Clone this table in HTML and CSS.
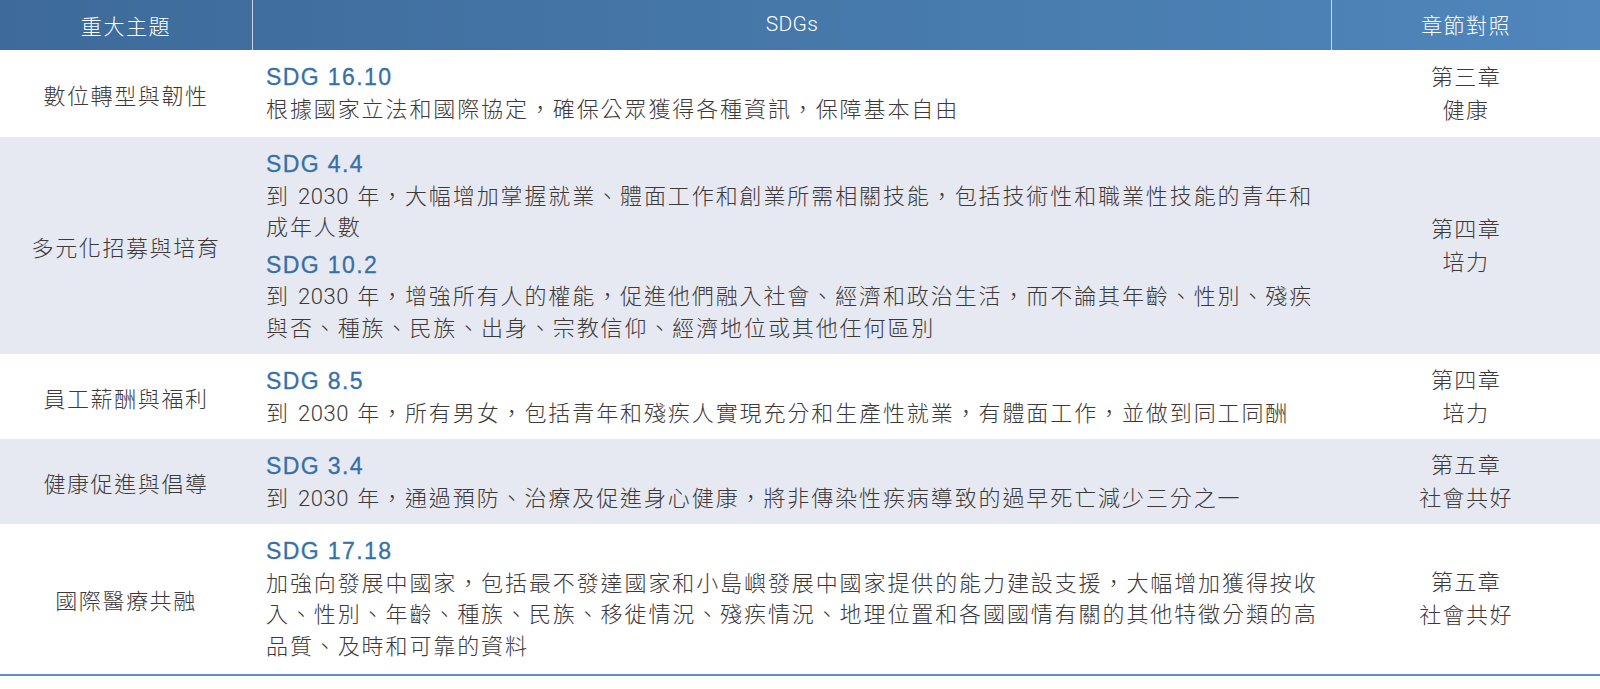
FILE: index.html
```html
<!DOCTYPE html>
<html lang="zh-Hant">
<head>
<meta charset="utf-8">
<title>SDGs</title>
<link rel="stylesheet" href="styles.css">
</head>
<body>
<div class="table">
  <div class="row head">
    <div class="c1">重大主題</div>
    <div class="c2 hc">SDGs</div>
    <div class="c3">章節對照</div>
  </div>

  <div class="row first">
    <div class="c1">數位轉型與韌性</div>
    <div class="c2">
      <div class="sdg">
        <div class="code">SDG 16.10</div>
        <div class="desc">根據國家立法和國際協定，確保公眾獲得各種資訊，保障基本自由</div>
      </div>
    </div>
    <div class="c3"><div>第三章</div><div>健康</div></div>
  </div>

  <div class="row alt">
    <div class="c1">多元化招募與培育</div>
    <div class="c2">
      <div class="sdg">
        <div class="code">SDG 4.4</div>
        <div class="desc">到 <span class="num">2030</span> 年，大幅增加掌握就業、體面工作和創業所需相關技能，包括技術性和職業性技能的青年和<br>成年人數</div>
      </div>
      <div class="sdg">
        <div class="code">SDG 10.2</div>
        <div class="desc">到 <span class="num">2030</span> 年，增強所有人的權能，促進他們融入社會、經濟和政治生活，而不論其年齡、性別、殘疾<br>與否、種族、民族、出身、宗教信仰、經濟地位或其他任何區別</div>
      </div>
    </div>
    <div class="c3"><div>第四章</div><div>培力</div></div>
  </div>

  <div class="row">
    <div class="c1">員工薪酬與福利</div>
    <div class="c2">
      <div class="sdg">
        <div class="code">SDG 8.5</div>
        <div class="desc">到 <span class="num">2030</span> 年，所有男女，包括青年和殘疾人實現充分和生產性就業，有體面工作，並做到同工同酬</div>
      </div>
    </div>
    <div class="c3"><div>第四章</div><div>培力</div></div>
  </div>

  <div class="row alt">
    <div class="c1">健康促進與倡導</div>
    <div class="c2">
      <div class="sdg">
        <div class="code">SDG 3.4</div>
        <div class="desc">到 <span class="num">2030</span> 年，通過預防、治療及促進身心健康，將非傳染性疾病導致的過早死亡減少三分之一</div>
      </div>
    </div>
    <div class="c3"><div>第五章</div><div>社會共好</div></div>
  </div>

  <div class="row last">
    <div class="c1">國際醫療共融</div>
    <div class="c2">
      <div class="sdg">
        <div class="code">SDG 17.18</div>
        <div class="desc">加強向發展中國家，包括最不發達國家和小島嶼發展中國家提供的能力建設支援，大幅增加獲得按收<br>入、性別、年齡、種族、民族、移徙情況、殘疾情況、地理位置和各國國情有關的其他特徵分類的高<br>品質、及時和可靠的資料</div>
      </div>
    </div>
    <div class="c3"><div>第五章</div><div>社會共好</div></div>
  </div>
</div>
</body>
</html>
```

FILE: styles.css
```css
html, body {
  margin: 0;
  padding: 0;
  background: #ffffff;
}

body {
  font-family: "Liberation Sans", "Noto Sans CJK TC", sans-serif;
  font-weight: 300;
  color: #3d3939;
  font-size: 22px;
  letter-spacing: 1.9px;
}

.table {
  width: 1600px;
  display: flex;
  flex-direction: column;
  border-bottom: 2px solid #5f8fc2;
}

.row {
  display: grid;
  grid-template-columns: 252px 1080px 268px;
}

.row.alt {
  background: #e6e9f1;
}

.head {
  height: 50px;
  background: linear-gradient(to right, #3d6a99, #4f86bb);
  color: #ffffff;
  font-size: 21px;
  letter-spacing: 1.4px;
}

.head > div {
  display: flex;
  align-items: center;
  justify-content: center;
}

.head .c2 {
  border-left: 1px solid #c9d7e8;
  border-right: 1px solid #c9d7e8;
  padding: 0;
  font-family: Roboto, "Liberation Sans", sans-serif;
  letter-spacing: 0.3px;
}

.c1 {
  display: flex;
  align-items: center;
  justify-content: center;
  text-align: center;
  letter-spacing: 1.6px;
}

.c2 {
  padding: 12px 10px 10px 14px;
  display: flex;
  flex-direction: column;
  gap: 6px;
  line-height: 31.5px;
}

.row.first .c2 {
  padding-bottom: 12px;
}

.row.last .c2 {
  padding-bottom: 12px;
}

.c3 {
  display: flex;
  flex-direction: column;
  align-items: center;
  justify-content: center;
  line-height: 33px;
  letter-spacing: 1.4px;
}

.code {
  color: #3570a8;
  font-size: 23px;
  font-weight: 500;
  letter-spacing: 1.4px;
  -webkit-text-stroke: 0.3px #3570a8;
}

.num {
  font-family: Roboto, "Liberation Sans", sans-serif;
  font-weight: 300;
  letter-spacing: 0.6px;
}

.desc {
  white-space: nowrap;
}
```
